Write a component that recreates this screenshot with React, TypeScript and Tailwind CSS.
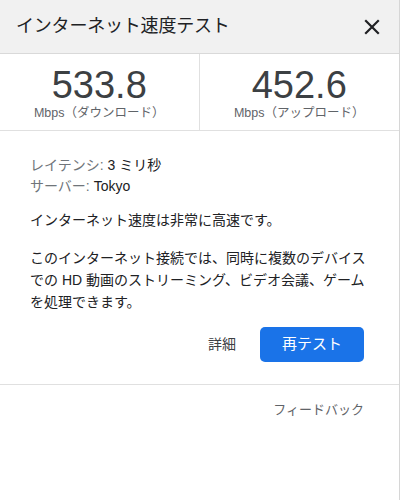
const FONT = '[font-family:"Liberation_Sans","Noto_Sans_CJK_JP",sans-serif]'

const STATS = [
  { value: '533.8', label: 'Mbps（ダウンロード）' },
  { value: '452.6', label: 'Mbps（アップロード）' },
]

export default function App() {
  return (
    <div className={`w-[400px] h-[500px] bg-white border-r border-[#d6d6d6] text-[#202124] ${FONT}`}>
      {/* Header */}
      <div className="h-[54px] flex items-center justify-between pl-4 pr-[19px] bg-[#f1f1f1] border-b border-[#d9d9d9]">
        <h1 className="text-[18px] text-[#202124] tracking-[-0.2px]">インターネット速度テスト</h1>
        <svg width="16" height="16" viewBox="0 0 16 16" className="text-[#202124]">
          <path d="M2 2 L14 14 M14 2 L2 14" stroke="currentColor" strokeWidth="2.2" strokeLinecap="square" />
        </svg>
      </div>

      {/* Speeds */}
      <div className="grid grid-cols-2 h-[77px] border-b border-[#e0e0e0]">
        {STATS.map((s, i) => (
          <div key={s.label} className={`flex flex-col items-center pt-[12px] ${i === 0 ? 'border-r border-[#e0e0e0]' : ''}`}>
            <div className="text-[38px] leading-[38px] text-[#3c4043]">{s.value}</div>
            <div className="text-[12.5px] leading-[16px] mt-[1px] text-[#5f6368]">{s.label}</div>
          </div>
        ))}
      </div>

      {/* Details */}
      <div className="px-[30px] pt-[24px] text-[14px]">
        <div className="leading-[21px]">
          <div><span className="text-[#70757a]">レイテンシ:</span> 3 ミリ秒</div>
          <div><span className="text-[#70757a]">サーバー:</span> Tokyo</div>
        </div>
        <p className="mt-[13px] leading-[21px]">インターネット速度は非常に高速です。</p>
        <p className="mt-[16px] leading-[22px]">
          このインターネット接続では、同時に複数のデバイスでの HD 動画のストリーミング、ビデオ会議、ゲームを処理できます。
        </p>
      </div>

      {/* Actions */}
      <div className="flex items-center justify-end gap-[24px] pr-[35px] pt-[14px] pb-[22px] border-b border-[#e0e0e0]">
        <button className="text-[14px] text-[#3c4043]">詳細</button>
        <button className="w-[104px] h-[35px] rounded-[5px] bg-[#1a73e8] text-white text-[15px]">再テスト</button>
      </div>

      <div className="flex justify-end pr-[35px] pt-[15px]">
        <span className="text-[13px] text-[#5f6368]">フィードバック</span>
      </div>
    </div>
  )
}
